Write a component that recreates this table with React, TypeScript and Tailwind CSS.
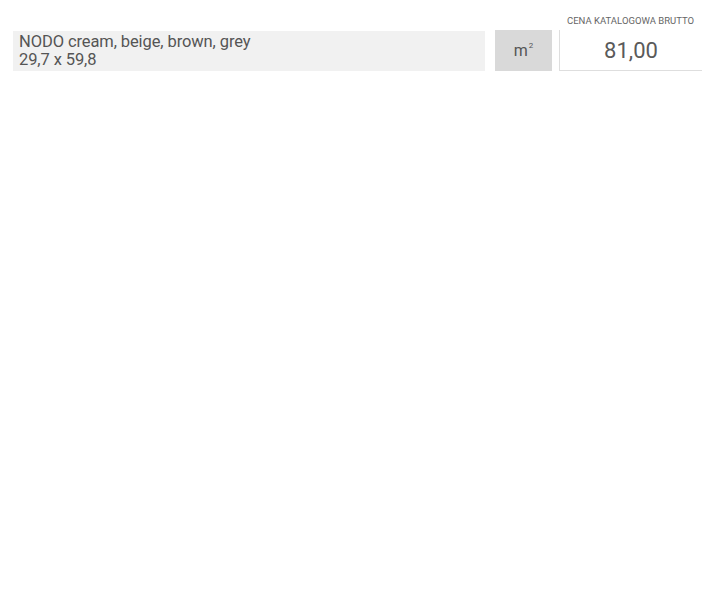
export default function App() {
  return (
    <div className="min-h-screen bg-white font-['Roboto',sans-serif] text-[#555]">
      <div className="flex items-end pl-[13px] pt-[15px]">
        <div className="h-[40px] w-[472px] bg-[#f1f1f1] pl-[6px] pt-[2px] text-[16.5px] leading-[18px] tracking-[-0.1px]">
          <div>NODO cream, beige, brown, grey</div>
          <div>29,7 x 59,8</div>
        </div>
        <div className="ml-[10px] flex h-[41px] w-[57px] items-center justify-center bg-[#d9d9d9] text-[16px]">
          <span>
            m<span className="relative -top-[8px] ml-[1px] text-[8px] leading-none">2</span>
          </span>
        </div>
        <div className="ml-[7px] flex w-[143px] flex-col">
          <div className="mb-[3px] text-center text-[9.5px] leading-[12px] text-[#666]">
            CENA KATALOGOWA BRUTTO
          </div>
          <div className="flex h-[41px] items-center justify-center border-b border-l border-[#dedede] text-[22px] text-[#5a5a5a]">
            81,00
          </div>
        </div>
      </div>
    </div>
  );
}
